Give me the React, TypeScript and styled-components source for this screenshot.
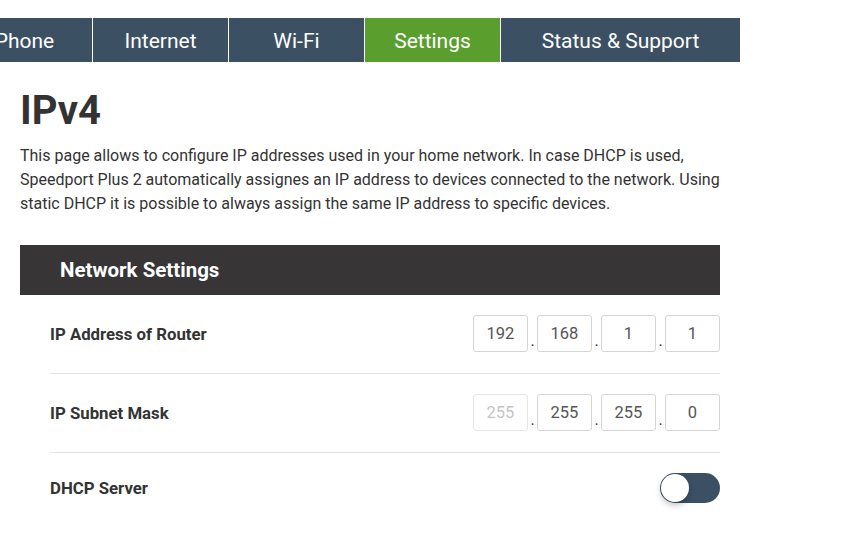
import React, { useState } from "react";
import styled, { createGlobalStyle } from "styled-components";

const GlobalStyle = createGlobalStyle`
  body {
    margin: 0;
    background: #ffffff;
    font-family: Roboto, "Liberation Sans", Arial, sans-serif;
    color: #333333;
    overflow: hidden;
  }
`;

const Page = styled.div`
  width: 842px;
  height: 550px;
  overflow: hidden;
`;

const Nav = styled.nav`
  display: flex;
  gap: 1px;
  margin: 18px 0 0 -43px;
  width: 783px;
  height: 44px;
  background: #ffffff;
`;

const Tab = styled.div<{ $active?: boolean; $wide?: boolean }>`
  flex: ${(p) => (p.$wide ? "1" : "0 0 135px")};
  display: flex;
  align-items: center;
  justify-content: center;
  padding-top: 1px;
  background: ${(p) => (p.$active ? "#5a9e2e" : "#3c5064")};
  color: #ffffff;
  font-size: 21px;
  cursor: pointer;
`;

const Content = styled.main`
  padding: 0 20px;
  width: 700px;
`;

const Title = styled.h1`
  margin: 25px 0 0;
  font-size: 40px;
  line-height: 48px;
  font-weight: 700;
  color: #333333;
`;

const Intro = styled.p`
  margin: 9px 0 0;
  font-size: 16px;
  line-height: 24px;
  color: #333333;
`;

const Panel = styled.section`
  margin-top: 29px;
`;

const PanelHeader = styled.div`
  height: 50px;
  display: flex;
  align-items: center;
  padding-left: 40px;
  background: #373536;
  color: #ffffff;
  font-size: 20.5px;
  font-weight: 700;
`;

const Rows = styled.div`
  padding-left: 30px;
`;

const Row = styled.div`
  display: flex;
  align-items: center;
  justify-content: space-between;
  padding: 20px 0 21px;
  border-bottom: 1px solid #e4e4e4;

  &:last-child {
    border-bottom: none;
  }
`;

const Label = styled.div`
  font-size: 16.8px;
  font-weight: 700;
  color: #333333;
`;

const IpGroup = styled.div`
  display: flex;
  align-items: flex-end;
`;

const Octet = styled.div<{ $muted?: boolean }>`
  width: 55px;
  height: 37px;
  box-sizing: border-box;
  border: 1px solid ${(p) => (p.$muted ? "#e6e6e6" : "#d4d4d4")};
  border-radius: 3px;
  display: flex;
  align-items: center;
  justify-content: center;
  font-size: 16.5px;
  color: ${(p) => (p.$muted ? "#c4c4c4" : "#555555")};
`;

const Dot = styled.span`
  width: 9px;
  text-align: center;
  font-size: 16px;
  line-height: 22px;
  color: #333333;
`;

const Switch = styled.button<{ $on: boolean }>`
  position: relative;
  width: 60px;
  height: 30px;
  border: none;
  padding: 0;
  border-radius: 15px;
  background: ${(p) => (p.$on ? "#5a9e2e" : "#3c5064")};
  cursor: pointer;
`;

const Knob = styled.span<{ $on: boolean }>`
  position: absolute;
  top: 1px;
  left: ${(p) => (p.$on ? "31px" : "1px")};
  width: 28px;
  height: 28px;
  border-radius: 50%;
  background: #ffffff;
  box-shadow: 0 3px 6px rgba(0, 0, 0, 0.25);
`;

const IpField: React.FC<{ values: string[]; mutedFirst?: boolean }> = ({ values, mutedFirst }) => (
  <IpGroup>
    {values.map((v, i) => (
      <React.Fragment key={i}>
        {i > 0 && <Dot>.</Dot>}
        <Octet $muted={mutedFirst && i === 0}>{v}</Octet>
      </React.Fragment>
    ))}
  </IpGroup>
);

const tabs = ["Phone", "Internet", "Wi-Fi", "Settings", "Status & Support"];

export default function App() {
  const [dhcp, setDhcp] = useState(false);

  return (
    <Page>
      <GlobalStyle />
      <Nav>
        {tabs.map((t, i) => (
          <Tab key={t} $active={t === "Settings"} $wide={i === tabs.length - 1}>
            {t}
          </Tab>
        ))}
      </Nav>
      <Content>
        <Title>IPv4</Title>
        <Intro>
          This page allows to configure IP addresses used in your home network. In case DHCP is used,
          Speedport Plus 2 automatically assignes an IP address to devices connected to the network. Using
          static DHCP it is possible to always assign the same IP address to specific devices.
        </Intro>
        <Panel>
          <PanelHeader>Network Settings</PanelHeader>
          <Rows>
            <Row>
              <Label>IP Address of Router</Label>
              <IpField values={["192", "168", "1", "1"]} />
            </Row>
            <Row>
              <Label>IP Subnet Mask</Label>
              <IpField values={["255", "255", "255", "0"]} mutedFirst />
            </Row>
            <Row>
              <Label>DHCP Server</Label>
              <Switch $on={dhcp} onClick={() => setDhcp(!dhcp)}>
                <Knob $on={dhcp} />
              </Switch>
            </Row>
          </Rows>
        </Panel>
      </Content>
    </Page>
  );
}
